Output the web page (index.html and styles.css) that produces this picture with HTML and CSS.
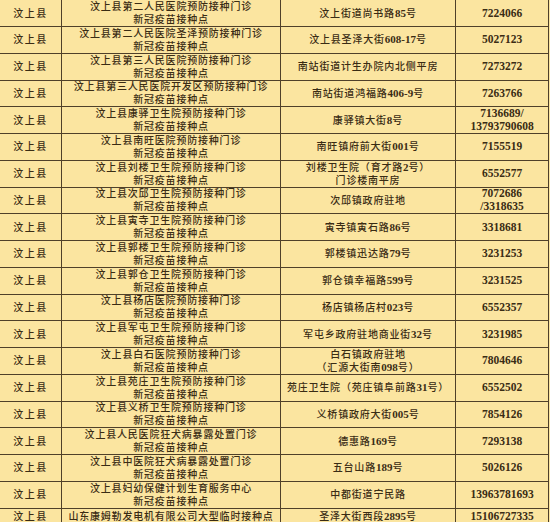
FILE: index.html
```html
<!DOCTYPE html>
<html lang="zh">
<head>
<meta charset="utf-8">
<link rel="stylesheet" href="styles.css">
</head>
<body>
<div class="sheet">
  <div class="c a"><span>汶上县</span></div><div class="c b"><span>汶上县第二人民医院预防接种门诊<br>新冠疫苗接种点</span></div><div class="c d"><span>汶上街道尚书路<span class="n">85</span>号</span></div><div class="c t"><span>7224066</span></div>
  <div class="c a"><span>汶上县</span></div><div class="c b"><span>汶上县第二人民医院圣泽预防接种门诊<br>新冠疫苗接种点</span></div><div class="c d"><span>汶上县圣泽大街<span class="n">608-17</span>号</span></div><div class="c t"><span>5027123</span></div>
  <div class="c a"><span>汶上县</span></div><div class="c b"><span>汶上县第三人民医院预防接种门诊<br>新冠疫苗接种点</span></div><div class="c d"><span>南站街道计生办院内北侧平房</span></div><div class="c t"><span>7273272</span></div>
  <div class="c a"><span>汶上县</span></div><div class="c b"><span>汶上县第三人民医院开发区预防接种门诊<br>新冠疫苗接种点</span></div><div class="c d"><span>南站街道鸿福路<span class="n">406-9</span>号</span></div><div class="c t"><span>7263766</span></div>
  <div class="c a"><span>汶上县</span></div><div class="c b"><span>汶上县康驿卫生院预防接种门诊<br>新冠疫苗接种点</span></div><div class="c d"><span>康驿镇大街<span class="n">8</span>号</span></div><div class="c t"><span>7136689/<br>13793790608</span></div>
  <div class="c a"><span>汶上县</span></div><div class="c b"><span>汶上县南旺医院预防接种门诊<br>新冠疫苗接种点</span></div><div class="c d"><span>南旺镇府前大街<span class="n">001</span>号</span></div><div class="c t"><span>7155519</span></div>
  <div class="c a"><span>汶上县</span></div><div class="c b"><span>汶上县刘楼卫生院预防接种门诊<br>新冠疫苗接种点</span></div><div class="c d"><span>刘楼卫生院（育才路<span class="n">2</span>号）<br>门诊楼南平房</span></div><div class="c t"><span>6552577</span></div>
  <div class="c a"><span>汶上县</span></div><div class="c b"><span>汶上县次邱卫生院预防接种门诊<br>新冠疫苗接种点</span></div><div class="c d"><span>次邱镇政府驻地</span></div><div class="c t"><span>7072686<br>/3318635</span></div>
  <div class="c a"><span>汶上县</span></div><div class="c b"><span>汶上县寅寺卫生院预防接种门诊<br>新冠疫苗接种点</span></div><div class="c d"><span>寅寺镇寅石路<span class="n">86</span>号</span></div><div class="c t"><span>3318681</span></div>
  <div class="c a"><span>汶上县</span></div><div class="c b"><span>汶上县郭楼卫生院预防接种门诊<br>新冠疫苗接种点</span></div><div class="c d"><span>郭楼镇迅达路<span class="n">79</span>号</span></div><div class="c t"><span>3231253</span></div>
  <div class="c a"><span>汶上县</span></div><div class="c b"><span>汶上县郭仓卫生院预防接种门诊<br>新冠疫苗接种点</span></div><div class="c d"><span>郭仓镇幸福路<span class="n">599</span>号</span></div><div class="c t"><span>3231525</span></div>
  <div class="c a"><span>汶上县</span></div><div class="c b"><span>汶上县杨店医院预防接种门诊<br>新冠疫苗接种点</span></div><div class="c d"><span>杨店镇杨店村<span class="n">023</span>号</span></div><div class="c t"><span>6552357</span></div>
  <div class="c a"><span>汶上县</span></div><div class="c b"><span>汶上县军屯卫生院预防接种门诊<br>新冠疫苗接种点</span></div><div class="c d"><span>军屯乡政府驻地商业街<span class="n">32</span>号</span></div><div class="c t"><span>3231985</span></div>
  <div class="c a"><span>汶上县</span></div><div class="c b"><span>汶上县白石医院预防接种门诊<br>新冠疫苗接种点</span></div><div class="c d"><span>白石镇政府驻地<br>（汇源大街南<span class="n">098</span>号）</span></div><div class="c t"><span>7804646</span></div>
  <div class="c a"><span>汶上县</span></div><div class="c b"><span>汶上县苑庄卫生院预防接种门诊<br>新冠疫苗接种点</span></div><div class="c d"><span>苑庄卫生院（苑庄镇阜前路<span class="n">31</span>号）</span></div><div class="c t"><span>6552502</span></div>
  <div class="c a"><span>汶上县</span></div><div class="c b"><span>汶上县义桥卫生院预防接种门诊<br>新冠疫苗接种点</span></div><div class="c d"><span>义桥镇政府大街<span class="n">005</span>号</span></div><div class="c t"><span>7854126</span></div>
  <div class="c a"><span>汶上县</span></div><div class="c b"><span>汶上县人民医院狂犬病暴露处置门诊<br>新冠疫苗接种点</span></div><div class="c d"><span>德惠路<span class="n">169</span>号</span></div><div class="c t"><span>7293138</span></div>
  <div class="c a"><span>汶上县</span></div><div class="c b"><span>汶上县中医院狂犬病暴露处置门诊<br>新冠疫苗接种点</span></div><div class="c d"><span>五台山路<span class="n">189</span>号</span></div><div class="c t"><span>5026126</span></div>
  <div class="c a"><span>汶上县</span></div><div class="c b"><span>汶上县妇幼保健计划生育服务中心<br>新冠疫苗接种点</span></div><div class="c d"><span>中都街道宁民路</span></div><div class="c t"><span>13963781693</span></div>
  <div class="c a"><span>汶上县</span></div><div class="c b"><span>山东康姆勒发电机有限公司大型临时接种点</span></div><div class="c d"><span>圣泽大街西段<span class="n">2895</span>号</span></div><div class="c t"><span>15106727335</span></div>
</div>
</body>
</html>
```

FILE: styles.css
```css
html, body {
  margin: 0;
  padding: 0;
  background: #fbe5a0;
}
body {
  width: 550px;
  height: 522px;
  overflow: hidden;
}
.sheet {
  display: grid;
  grid-template-columns: 62px 219px 175px 93px;
  grid-template-rows: repeat(19, 26.75px) 16px;
  padding-top: 0.3px;
  font-family: "Liberation Serif", "Noto Sans CJK SC", serif;
  font-weight: 700;
  color: #3a2c14;
  background: #fbe5a0;
}
.c {
  box-sizing: border-box;
  border-right: 1px solid #4f4029;
  border-bottom: 1px solid #4f4029;
  display: flex;
  align-items: center;
  justify-content: center;
  text-align: center;
  font-size: 10px;
  line-height: 13px;
  letter-spacing: 0.8px;
  white-space: nowrap;
  overflow: hidden;
}
.a, .b, .d {
  font-weight: 500;
}
.a {
  letter-spacing: 1.5px;
}
.n {
  font-family: "Liberation Serif", serif;
  font-weight: 700;
  font-size: 11px;
  letter-spacing: 0;
}
.t {
  font-size: 11.5px;
  letter-spacing: 0;
  line-height: 13px;
}
```
